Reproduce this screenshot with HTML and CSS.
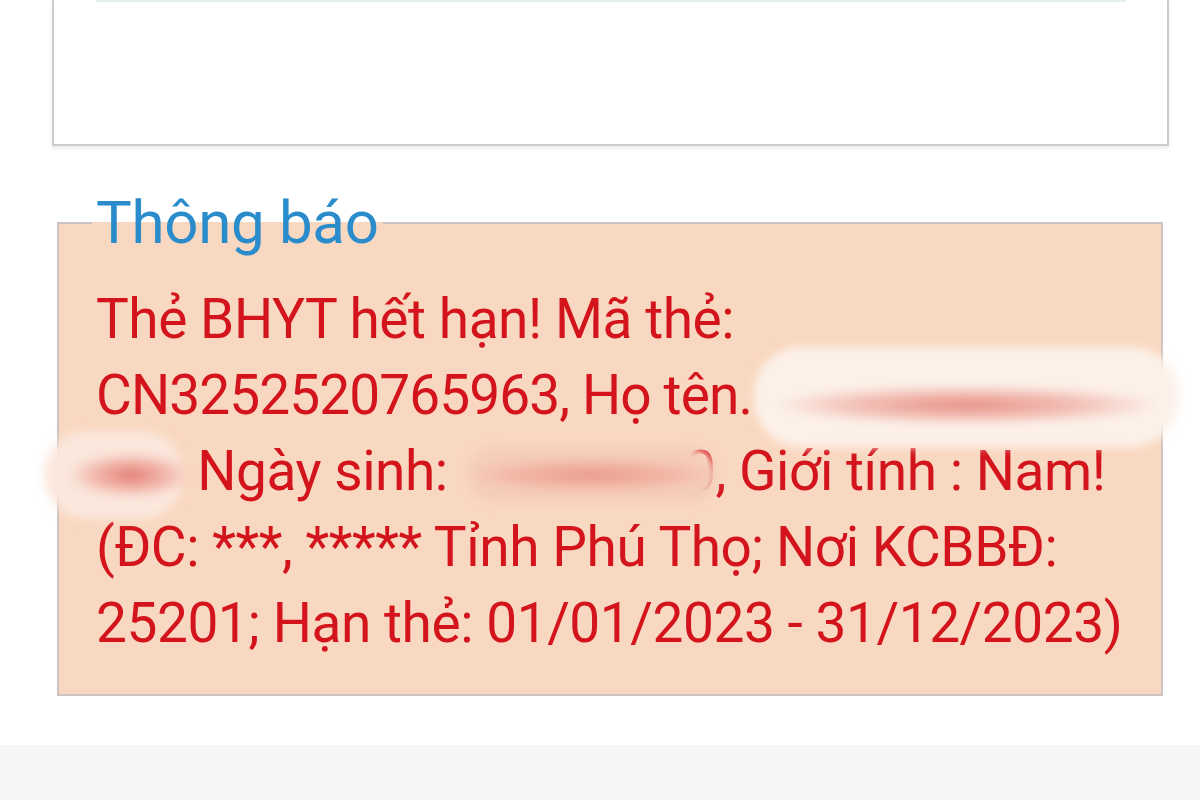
FILE: index.html
```html
<!DOCTYPE html>
<html lang="vi">
<head>
<meta charset="utf-8">
<title>Thông báo</title>
<link rel="stylesheet" href="styles.css">
</head>
<body>
<div class="screen">
  <div class="top-card">
    <div class="top-rule"></div>
  </div>

  <fieldset class="notice">
    <legend class="notice-title">Thông báo</legend>
    <div class="notice-body">
      <span class="line">Thẻ BHYT hết hạn! Mã thẻ:</span>
      <span class="line">CN3252520765963, Họ tên.<span class="redact redact-name"><span class="smear"></span></span></span>
      <span class="line"><span class="redact redact-name2"><span class="smear"></span></span> Ngày sinh: <span class="redact redact-dob"><span class="smear"></span></span>0, Giới tính : Nam!</span>
      <span class="line">(ĐC: ***, ***** Tỉnh Phú Thọ; Nơi KCBBĐ:</span>
      <span class="line">25201; Hạn thẻ: 01/01/2023 - 31/12/2023)</span>
    </div>
  </fieldset>

  <div class="bottom-bar"></div>
</div>
</body>
</html>
```

FILE: styles.css
```css
html, body {
  margin: 0;
  padding: 0;
  background: #ffffff;
}

.screen {
  width: 1200px;
  height: 800px;
  overflow: hidden;
  display: flex;
  flex-direction: column;
  font-family: Roboto, "Noto Sans", sans-serif;
}

.top-card {
  height: 144px;
  margin: 0 31px 0 52px;
  border: 2px solid #cdcdcd;
  border-top: none;
  background: #ffffff;
  box-shadow: 0 3px 4px rgba(0, 0, 0, 0.08);
  display: flex;
  flex-direction: column;
  align-items: center;
}

.top-rule {
  width: 1030px;
  height: 2px;
  background: #e4efec;
}

.notice {
  margin: 44px 37px 0 57px;
  padding: 25px 30px 33px 37px;
  border: 2px solid #cbc4c0;
  background: #f9d8c1;
  min-width: 0;
}

.notice-title {
  margin-left: -4px;
  padding: 0 4px 0 4px;
  font-size: 60px;
  line-height: 66px;
  color: #2a8ccb;
  letter-spacing: -0.3px;
}

.notice-body {
  display: flex;
  flex-direction: column;
  font-size: 55px;
  line-height: 76px;
  color: #d3141c;
  letter-spacing: -0.45px;
}

.line {
  display: block;
  height: 76px;
  white-space: nowrap;
}

.line:nth-child(2) {
  letter-spacing: -0.9px;
}

.redact {
  display: inline-block;
  vertical-align: middle;
  border-radius: 48px;
  filter: blur(5px);
}

.smear {
  display: block;
  width: 100%;
  height: 100%;
  border-radius: 40px;
}

.redact-name {
  width: 425px;
  height: 100px;
  margin: -32px 0 -28px 2px;
  background: #fcf1e9;
}

.redact-name .smear {
  background: radial-gradient(ellipse 46% 20% at 50% 58%, #e88f85 0%, rgba(236, 160, 150, 0.6) 60%, rgba(252, 241, 233, 0) 100%);
}

.redact-name2 {
  width: 140px;
  height: 88px;
  margin: -24px 0 -24px -52px;
  background: #fbe7dc;
}

.redact-name2 .smear {
  background: radial-gradient(ellipse 45% 26% at 62% 50%, #e47d73 0%, rgba(236, 150, 140, 0.5) 65%, rgba(251, 231, 220, 0) 100%);
}

.redact-dob {
  width: 250px;
  height: 56px;
  margin: -10px -32px -10px 6px;
  background: #f5cdb9;
}

.redact-dob .smear {
  background: radial-gradient(ellipse 50% 30% at 50% 50%, #ea9a8c 0%, rgba(240, 170, 155, 0.6) 70%, rgba(245, 205, 185, 0) 100%);
}

.bottom-bar {
  margin-top: auto;
  height: 55px;
  background: #f6f6f6;
}
```
